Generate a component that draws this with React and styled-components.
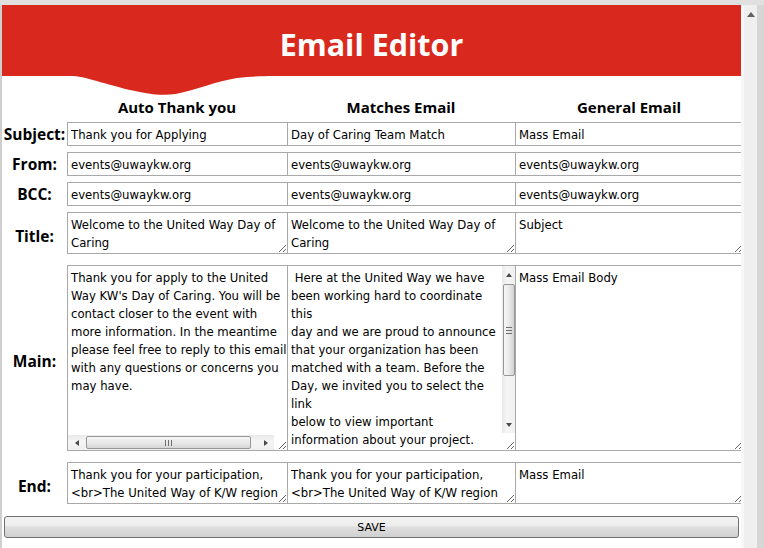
import React from 'react';
import styled, { createGlobalStyle } from 'styled-components';

const Global = createGlobalStyle`
  html, body { margin: 0; padding: 0; background: #fff; overflow: hidden; }
  body { width: 764px; height: 548px; }
`;

const Frame = styled.div`
  display: flex;
  width: 764px;
  height: 548px;
  box-sizing: border-box;
  border-top: 5px solid #e0e0e0;
`;

const Page = styled.div`
  flex: 1;
  min-width: 0;
  border-left: 2px solid #cfcfcf;
  overflow: hidden;
  display: flex;
  flex-direction: column;
  background: #fff;
`;

const Header = styled.header`
  position: relative;
  height: 71px;
  flex: none;
  box-sizing: border-box;
  padding-top: 21px;
  background: #d9291e;
  display: flex;
  justify-content: center;
  align-items: flex-start;
`;

const Title = styled.h1`
  margin: 0;
  font-family: "Open Sans", sans-serif;
  font-weight: 700;
  font-size: 30.5px;
  line-height: 37px;
  color: #fff;
`;

const Wave = styled.svg`
  position: absolute;
  left: 66px;
  top: 100%;
`;

const Sheet = styled.div`
  display: flex;
  flex-direction: column;
  padding-top: 19px;
`;

const Row = styled.div`
  display: grid;
  grid-template-columns: 65px 220px 228px 228px;
  height: ${(p) => p.$h}px;
  margin-top: ${(p) => p.$mt || 0}px;
  flex: none;
`;

const ColHead = styled.div`
  font-family: "Open Sans", sans-serif;
  font-weight: 700;
  font-size: 15px;
  line-height: 24px;
  color: #000;
  text-align: center;
`;

const Label = styled.div`
  display: flex;
  align-items: center;
  justify-content: center;
  box-sizing: border-box;
  padding-top: ${(p) => (p.$tall ? 5 : 0)}px;
  font-family: "Open Sans", sans-serif;
  font-weight: 700;
  font-size: 15.5px;
  color: #000;
`;

const Cell = styled.div`
  position: relative;
  min-width: 0;
`;

const Input = styled.input`
  display: block;
  width: 100%;
  height: 100%;
  box-sizing: border-box;
  margin: 0;
  border: 1px solid #a9a9a9;
  border-right: none;
  padding: 1px 3px 0;
  font-family: "DejaVu Sans", sans-serif;
  font-size: 11.7px;
  color: #000;
  background: #fff;
  outline: none;
`;

const Area = styled.textarea`
  display: block;
  width: 100%;
  height: 100%;
  box-sizing: border-box;
  margin: 0;
  border: 1px solid #a9a9a9;
  border-right: none;
  padding: 3px ${(p) => (p.$vscroll ? 16 : 3)}px 0 3px;
  font-family: "DejaVu Sans", sans-serif;
  font-size: 11.7px;
  line-height: 18px;
  white-space: pre;
  overflow: hidden;
  resize: both;
  color: #000;
  background: #fff;
  outline: none;
`;

const HScroll = styled.div`
  position: absolute;
  left: 1px;
  right: 13px;
  bottom: 1px;
  height: 15px;
  display: flex;
  align-items: center;
  background: linear-gradient(#e9e9e9, #f5f5f5 40%, #f0f0f0);
`;

const VScroll = styled.div`
  position: absolute;
  top: 1px;
  right: 0;
  bottom: 18px;
  width: 13px;
  display: flex;
  flex-direction: column;
  align-items: center;
  background: linear-gradient(to right, #e9e9e9, #f5f5f5 40%, #f0f0f0);
`;

const ArrowBox = styled.div`
  flex: none;
  width: ${(p) => (p.$v ? '13px' : '17px')};
  height: ${(p) => (p.$v ? '17px' : '15px')};
  display: flex;
  align-items: center;
  justify-content: center;
`;

const Track = styled.div`
  flex: 1;
`;

const HThumb = styled.div`
  flex: none;
  width: 165px;
  height: 13px;
  margin-left: 1px;
  box-sizing: border-box;
  border: 1px solid #979797;
  border-radius: 2px;
  background: linear-gradient(#f6f6f6, #e9e9e9 50%, #d6d6d6);
  display: flex;
  align-items: center;
  justify-content: center;
`;

const VThumb = styled.div`
  flex: none;
  width: 12px;
  height: 92px;
  margin-top: 1px;
  box-sizing: border-box;
  border: 1px solid #979797;
  border-radius: 2px;
  background: linear-gradient(to right, #f6f6f6, #e9e9e9 50%, #d2d2d2);
  display: flex;
  align-items: center;
  justify-content: center;
`;

const PageBar = styled.div`
  position: relative;
  width: 23px;
  flex: none;
  background: linear-gradient(to right, #f8f8f8 0 3px, #efefef 3px 16px, #d6d6d6 16px);
`;

const PageArrow = styled.svg`
  position: absolute;
  top: 7px;
  left: 6px;
`;

const SaveButton = styled.button`
  flex: none;
  margin: 12px 2px 0;
  height: 22px;
  padding: 0;
  border: 1px solid #707070;
  border-radius: 3px;
  background: linear-gradient(#f3f3f3, #ececec 45%, #dedede 50%, #d0d0d0);
  font-family: "DejaVu Sans", sans-serif;
  font-size: 11px;
  color: #000;
`;

const Tri = ({ dir }) => {
  const pts = {
    left: '4,0 4,6 0,3',
    right: '0,0 0,6 4,3',
    up: '0,4 6,4 3,0',
    down: '0,0 6,0 3,4',
  }[dir];
  const horiz = dir === 'left' || dir === 'right';
  return (
    <svg width={horiz ? 4 : 6} height={horiz ? 6 : 4} viewBox={horiz ? '0 0 4 6' : '0 0 6 4'}>
      <polygon points={pts} fill="#4a4a4a" />
    </svg>
  );
};

const HGrip = () => (
  <svg width="7" height="6" viewBox="0 0 7 6">
    <path d="M0.5 0v6M3.5 0v6M6.5 0v6" stroke="#6d6d6d" strokeWidth="1" />
  </svg>
);

const VGrip = () => (
  <svg width="6" height="7" viewBox="0 0 6 7">
    <path d="M0 0.5h6M0 3.5h6M0 6.5h6" stroke="#6d6d6d" strokeWidth="1" />
  </svg>
);

const main1 = [
  'Thank you for apply to the United',
  "Way KW's Day of Caring. You will be",
  'contact closer to the event with',
  'more information. In the meantime',
  'please feel free to reply to this email',
  'with any questions or concerns you',
  'may have.',
].join('\n');

const main2 = [
  ' Here at the United Way we have',
  'been working hard to coordinate',
  'this',
  'day and we are proud to announce',
  'that your organization has been',
  'matched with a team. Before the',
  'Day, we invited you to select the',
  'link',
  'below to view important',
  'information about your project.',
].join('\n');

const noop = () => {};

export default function App() {
  return (
    <>
      <Global />
      <Frame>
        <Page>
          <Header>
            <Title>Email Editor</Title>
            <Wave width="205" height="20" viewBox="0 0 200 20" preserveAspectRatio="none">
              <path
                d="M0 0 L5 0 C20 1 40 10 70 16 C85 19 95 19.5 105 18 C125 14 145 5 165 2 C180 0.5 190 0 200 0 Z"
                fill="#d9291e"
              />
            </Wave>
          </Header>
          <Sheet>
            <Row $h={24}>
              <div />
              <ColHead>Auto Thank you</ColHead>
              <ColHead>Matches Email</ColHead>
              <ColHead>General Email</ColHead>
            </Row>
            <Row $h={24} $mt={3}>
              <Label>Subject:</Label>
              <Cell><Input value="Thank you for Applying" onChange={noop} /></Cell>
              <Cell><Input value="Day of Caring Team Match" onChange={noop} /></Cell>
              <Cell><Input value="Mass Email" onChange={noop} /></Cell>
            </Row>
            <Row $h={24} $mt={6}>
              <Label>From:</Label>
              <Cell><Input value="events@uwaykw.org" onChange={noop} /></Cell>
              <Cell><Input value="events@uwaykw.org" onChange={noop} /></Cell>
              <Cell><Input value="events@uwaykw.org" onChange={noop} /></Cell>
            </Row>
            <Row $h={24} $mt={6}>
              <Label>BCC:</Label>
              <Cell><Input value="events@uwaykw.org" onChange={noop} /></Cell>
              <Cell><Input value="events@uwaykw.org" onChange={noop} /></Cell>
              <Cell><Input value="events@uwaykw.org" onChange={noop} /></Cell>
            </Row>
            <Row $h={42} $mt={6}>
              <Label $tall>Title:</Label>
              <Cell><Area wrap="off" value={'Welcome to the United Way Day of\nCaring'} onChange={noop} /></Cell>
              <Cell><Area wrap="off" value={'Welcome to the United Way Day of\nCaring'} onChange={noop} /></Cell>
              <Cell><Area wrap="off" value="Subject" onChange={noop} /></Cell>
            </Row>
            <Row $h={186} $mt={11}>
              <Label $tall>Main:</Label>
              <Cell>
                <Area wrap="off" value={main1} onChange={noop} />
                <HScroll>
                  <ArrowBox><Tri dir="left" /></ArrowBox>
                  <HThumb><HGrip /></HThumb>
                  <Track />
                  <ArrowBox><Tri dir="right" /></ArrowBox>
                </HScroll>
              </Cell>
              <Cell>
                <Area wrap="off" $vscroll value={main2} onChange={noop} />
                <VScroll>
                  <ArrowBox $v><Tri dir="up" /></ArrowBox>
                  <VThumb><VGrip /></VThumb>
                  <Track />
                  <ArrowBox $v><Tri dir="down" /></ArrowBox>
                </VScroll>
              </Cell>
              <Cell><Area wrap="off" value="Mass Email Body" onChange={noop} /></Cell>
            </Row>
            <Row $h={42} $mt={11}>
              <Label $tall>End:</Label>
              <Cell><Area wrap="off" value={'Thank you for your participation,\n<br>The United Way of K/W region'} onChange={noop} /></Cell>
              <Cell><Area wrap="off" value={'Thank you for your participation,\n<br>The United Way of K/W region'} onChange={noop} /></Cell>
              <Cell><Area wrap="off" value="Mass Email" onChange={noop} /></Cell>
            </Row>
            <SaveButton type="button">SAVE</SaveButton>
          </Sheet>
        </Page>
        <PageBar>
          <PageArrow width="8" height="5" viewBox="0 0 8 5">
            <polygon points="0,5 8,5 4,0" fill="#606060" />
          </PageArrow>
        </PageBar>
      </Frame>
    </>
  );
}
